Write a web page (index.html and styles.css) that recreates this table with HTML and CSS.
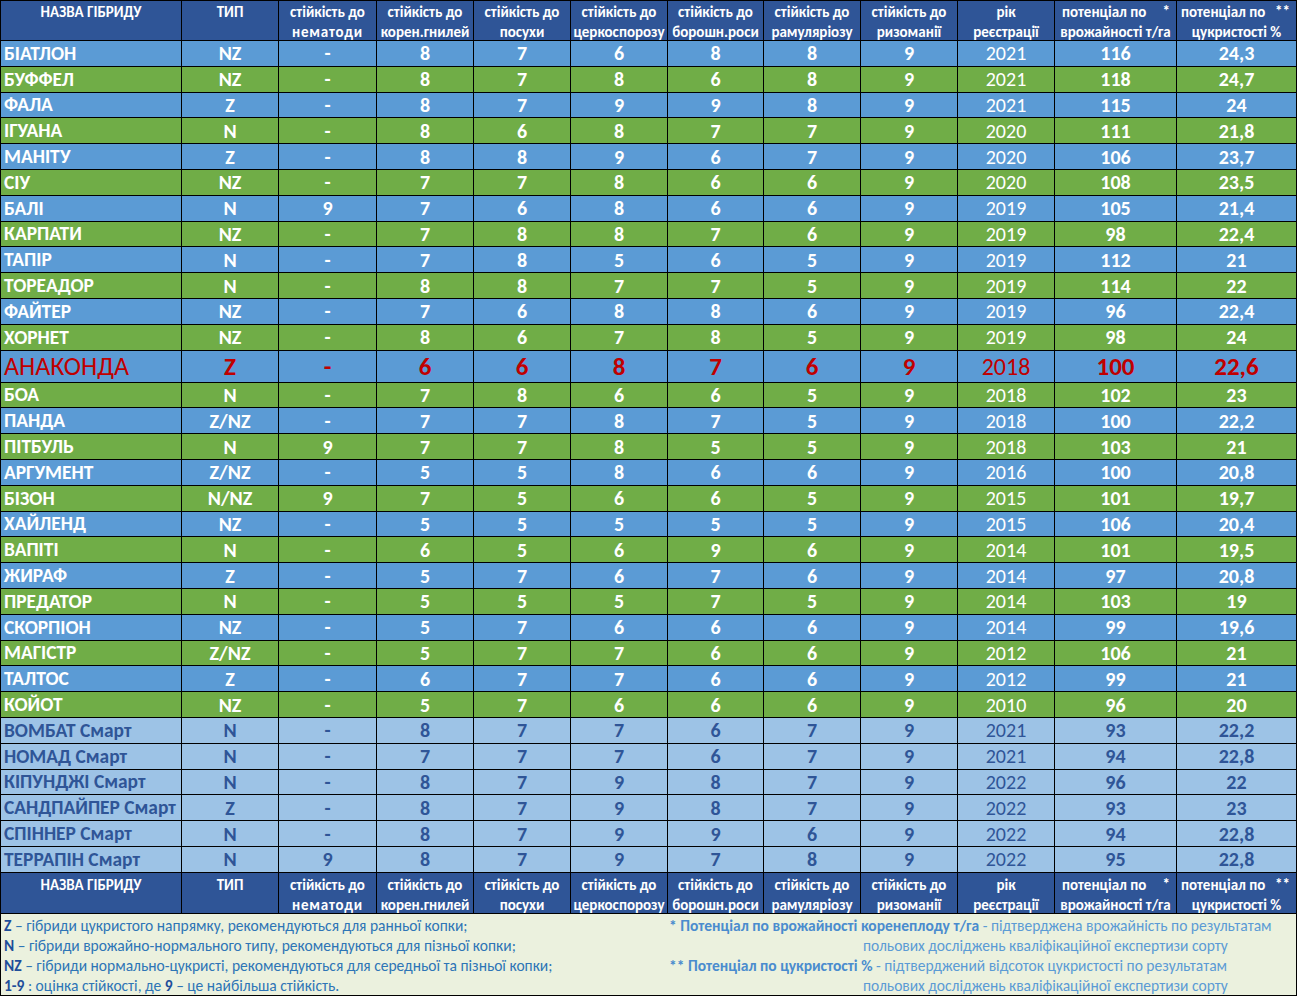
FILE: index.html
```html
<!DOCTYPE html>
<html lang="uk">
<head>
<meta charset="utf-8">
<title>Гібриди цукрових буряків</title>
<link rel="stylesheet" href="styles.css">
</head>
<body>
<div class="sheet">
  <div class="row head">
    <div class="c name"><span>НАЗВА ГІБРИДУ</span><span>&nbsp;</span></div>
    <div class="c"><span>ТИП</span><span>&nbsp;</span></div>
    <div class="c"><span>стійкість до</span><span class="sp">нематоди</span></div>
    <div class="c"><span>стійкість до</span><span>корен.гнилей</span></div>
    <div class="c"><span>стійкість до</span><span>посухи</span></div>
    <div class="c"><span>стійкість до</span><span>церкоспорозу</span></div>
    <div class="c"><span>стійкість до</span><span>борошн.роси</span></div>
    <div class="c"><span>стійкість до</span><span>рамуляріозу</span></div>
    <div class="c"><span>стійкість до</span><span>ризоманії</span></div>
    <div class="c"><span>рік</span><span>реєстрації</span></div>
    <div class="c"><span class="star s1">потенціал по <i>*</i></span><span>врожайності т/га</span></div>
    <div class="c"><span class="star s2">потенціал по <i>**</i></span><span>цукристості %</span></div>
  </div>

  <div class="row blue"><div class="c name">БІАТЛОН</div><div class="c">NZ</div><div class="c">-</div><div class="c">8</div><div class="c">7</div><div class="c">6</div><div class="c">8</div><div class="c">8</div><div class="c">9</div><div class="c yr">2021</div><div class="c">116</div><div class="c">24,3</div></div>
  <div class="row green"><div class="c name">БУФФЕЛ</div><div class="c">NZ</div><div class="c">-</div><div class="c">8</div><div class="c">7</div><div class="c">8</div><div class="c">6</div><div class="c">8</div><div class="c">9</div><div class="c yr">2021</div><div class="c">118</div><div class="c">24,7</div></div>
  <div class="row blue"><div class="c name">ФАЛА</div><div class="c">Z</div><div class="c">-</div><div class="c">8</div><div class="c">7</div><div class="c">9</div><div class="c">9</div><div class="c">8</div><div class="c">9</div><div class="c yr">2021</div><div class="c">115</div><div class="c">24</div></div>
  <div class="row green"><div class="c name">ІГУАНА</div><div class="c">N</div><div class="c">-</div><div class="c">8</div><div class="c">6</div><div class="c">8</div><div class="c">7</div><div class="c">7</div><div class="c">9</div><div class="c yr">2020</div><div class="c">111</div><div class="c">21,8</div></div>
  <div class="row blue"><div class="c name">МАНІТУ</div><div class="c">Z</div><div class="c">-</div><div class="c">8</div><div class="c">8</div><div class="c">9</div><div class="c">6</div><div class="c">7</div><div class="c">9</div><div class="c yr">2020</div><div class="c">106</div><div class="c">23,7</div></div>
  <div class="row green"><div class="c name">СІУ</div><div class="c">NZ</div><div class="c">-</div><div class="c">7</div><div class="c">7</div><div class="c">8</div><div class="c">6</div><div class="c">6</div><div class="c">9</div><div class="c yr">2020</div><div class="c">108</div><div class="c">23,5</div></div>
  <div class="row blue"><div class="c name">БАЛІ</div><div class="c">N</div><div class="c">9</div><div class="c">7</div><div class="c">6</div><div class="c">8</div><div class="c">6</div><div class="c">6</div><div class="c">9</div><div class="c yr">2019</div><div class="c">105</div><div class="c">21,4</div></div>
  <div class="row green"><div class="c name">КАРПАТИ</div><div class="c">NZ</div><div class="c">-</div><div class="c">7</div><div class="c">8</div><div class="c">8</div><div class="c">7</div><div class="c">6</div><div class="c">9</div><div class="c yr">2019</div><div class="c">98</div><div class="c">22,4</div></div>
  <div class="row blue"><div class="c name">ТАПІР</div><div class="c">N</div><div class="c">-</div><div class="c">7</div><div class="c">8</div><div class="c">5</div><div class="c">6</div><div class="c">5</div><div class="c">9</div><div class="c yr">2019</div><div class="c">112</div><div class="c">21</div></div>
  <div class="row green"><div class="c name">ТОРЕАДОР</div><div class="c">N</div><div class="c">-</div><div class="c">8</div><div class="c">8</div><div class="c">7</div><div class="c">7</div><div class="c">5</div><div class="c">9</div><div class="c yr">2019</div><div class="c">114</div><div class="c">22</div></div>
  <div class="row blue"><div class="c name">ФАЙТЕР</div><div class="c">NZ</div><div class="c">-</div><div class="c">7</div><div class="c">6</div><div class="c">8</div><div class="c">8</div><div class="c">6</div><div class="c">9</div><div class="c yr">2019</div><div class="c">96</div><div class="c">22,4</div></div>
  <div class="row green"><div class="c name">ХОРНЕТ</div><div class="c">NZ</div><div class="c">-</div><div class="c">8</div><div class="c">6</div><div class="c">7</div><div class="c">8</div><div class="c">5</div><div class="c">9</div><div class="c yr">2019</div><div class="c">98</div><div class="c">24</div></div>
  <div class="row blue big"><div class="c name">АНАКОНДА</div><div class="c">Z</div><div class="c">-</div><div class="c">6</div><div class="c">6</div><div class="c">8</div><div class="c">7</div><div class="c">6</div><div class="c">9</div><div class="c yr">2018</div><div class="c">100</div><div class="c">22,6</div></div>
  <div class="row green"><div class="c name">БОА</div><div class="c">N</div><div class="c">-</div><div class="c">7</div><div class="c">8</div><div class="c">6</div><div class="c">6</div><div class="c">5</div><div class="c">9</div><div class="c yr">2018</div><div class="c">102</div><div class="c">23</div></div>
  <div class="row blue"><div class="c name">ПАНДА</div><div class="c">Z/NZ</div><div class="c">-</div><div class="c">7</div><div class="c">7</div><div class="c">8</div><div class="c">7</div><div class="c">5</div><div class="c">9</div><div class="c yr">2018</div><div class="c">100</div><div class="c">22,2</div></div>
  <div class="row green"><div class="c name">ПІТБУЛЬ</div><div class="c">N</div><div class="c">9</div><div class="c">7</div><div class="c">7</div><div class="c">8</div><div class="c">5</div><div class="c">5</div><div class="c">9</div><div class="c yr">2018</div><div class="c">103</div><div class="c">21</div></div>
  <div class="row blue"><div class="c name">АРГУМЕНТ</div><div class="c">Z/NZ</div><div class="c">-</div><div class="c">5</div><div class="c">5</div><div class="c">8</div><div class="c">6</div><div class="c">6</div><div class="c">9</div><div class="c yr">2016</div><div class="c">100</div><div class="c">20,8</div></div>
  <div class="row green"><div class="c name">БІЗОН</div><div class="c">N/NZ</div><div class="c">9</div><div class="c">7</div><div class="c">5</div><div class="c">6</div><div class="c">6</div><div class="c">5</div><div class="c">9</div><div class="c yr">2015</div><div class="c">101</div><div class="c">19,7</div></div>
  <div class="row blue"><div class="c name">ХАЙЛЕНД</div><div class="c">NZ</div><div class="c">-</div><div class="c">5</div><div class="c">5</div><div class="c">5</div><div class="c">5</div><div class="c">5</div><div class="c">9</div><div class="c yr">2015</div><div class="c">106</div><div class="c">20,4</div></div>
  <div class="row green"><div class="c name">ВАПІТІ</div><div class="c">N</div><div class="c">-</div><div class="c">6</div><div class="c">5</div><div class="c">6</div><div class="c">9</div><div class="c">6</div><div class="c">9</div><div class="c yr">2014</div><div class="c">101</div><div class="c">19,5</div></div>
  <div class="row blue"><div class="c name">ЖИРАФ</div><div class="c">Z</div><div class="c">-</div><div class="c">5</div><div class="c">7</div><div class="c">6</div><div class="c">7</div><div class="c">6</div><div class="c">9</div><div class="c yr">2014</div><div class="c">97</div><div class="c">20,8</div></div>
  <div class="row green"><div class="c name">ПРЕДАТОР</div><div class="c">N</div><div class="c">-</div><div class="c">5</div><div class="c">5</div><div class="c">5</div><div class="c">7</div><div class="c">5</div><div class="c">9</div><div class="c yr">2014</div><div class="c">103</div><div class="c">19</div></div>
  <div class="row blue"><div class="c name">СКОРПІОН</div><div class="c">NZ</div><div class="c">-</div><div class="c">5</div><div class="c">7</div><div class="c">6</div><div class="c">6</div><div class="c">6</div><div class="c">9</div><div class="c yr">2014</div><div class="c">99</div><div class="c">19,6</div></div>
  <div class="row green"><div class="c name">МАГІСТР</div><div class="c">Z/NZ</div><div class="c">-</div><div class="c">5</div><div class="c">7</div><div class="c">7</div><div class="c">6</div><div class="c">6</div><div class="c">9</div><div class="c yr">2012</div><div class="c">106</div><div class="c">21</div></div>
  <div class="row blue"><div class="c name">ТАЛТОС</div><div class="c">Z</div><div class="c">-</div><div class="c">6</div><div class="c">7</div><div class="c">7</div><div class="c">6</div><div class="c">6</div><div class="c">9</div><div class="c yr">2012</div><div class="c">99</div><div class="c">21</div></div>
  <div class="row green"><div class="c name">КОЙОТ</div><div class="c">NZ</div><div class="c">-</div><div class="c">5</div><div class="c">7</div><div class="c">6</div><div class="c">6</div><div class="c">6</div><div class="c">9</div><div class="c yr">2010</div><div class="c">96</div><div class="c">20</div></div>
  <div class="row smart"><div class="c name">ВОМБАТ Смарт</div><div class="c">N</div><div class="c">-</div><div class="c">8</div><div class="c">7</div><div class="c">7</div><div class="c">6</div><div class="c">7</div><div class="c">9</div><div class="c yr">2021</div><div class="c">93</div><div class="c">22,2</div></div>
  <div class="row smart"><div class="c name">НОМАД Смарт</div><div class="c">N</div><div class="c">-</div><div class="c">7</div><div class="c">7</div><div class="c">7</div><div class="c">6</div><div class="c">7</div><div class="c">9</div><div class="c yr">2021</div><div class="c">94</div><div class="c">22,8</div></div>
  <div class="row smart"><div class="c name">КІПУНДЖІ Смарт</div><div class="c">N</div><div class="c">-</div><div class="c">8</div><div class="c">7</div><div class="c">9</div><div class="c">8</div><div class="c">7</div><div class="c">9</div><div class="c yr">2022</div><div class="c">96</div><div class="c">22</div></div>
  <div class="row smart"><div class="c name">САНДПАЙПЕР Смарт</div><div class="c">Z</div><div class="c">-</div><div class="c">8</div><div class="c">7</div><div class="c">9</div><div class="c">8</div><div class="c">7</div><div class="c">9</div><div class="c yr">2022</div><div class="c">93</div><div class="c">23</div></div>
  <div class="row smart"><div class="c name">СПІННЕР Смарт</div><div class="c">N</div><div class="c">-</div><div class="c">8</div><div class="c">7</div><div class="c">9</div><div class="c">9</div><div class="c">6</div><div class="c">9</div><div class="c yr">2022</div><div class="c">94</div><div class="c">22,8</div></div>
  <div class="row smart"><div class="c name">ТЕРРАПІН Смарт</div><div class="c">N</div><div class="c">9</div><div class="c">8</div><div class="c">7</div><div class="c">9</div><div class="c">7</div><div class="c">8</div><div class="c">9</div><div class="c yr">2022</div><div class="c">95</div><div class="c">22,8</div></div>

  <div class="row head foot">
    <div class="c name"><span>НАЗВА ГІБРИДУ</span><span>&nbsp;</span></div>
    <div class="c"><span>ТИП</span><span>&nbsp;</span></div>
    <div class="c"><span>стійкість до</span><span class="sp">нематоди</span></div>
    <div class="c"><span>стійкість до</span><span>корен.гнилей</span></div>
    <div class="c"><span>стійкість до</span><span>посухи</span></div>
    <div class="c"><span>стійкість до</span><span>церкоспорозу</span></div>
    <div class="c"><span>стійкість до</span><span>борошн.роси</span></div>
    <div class="c"><span>стійкість до</span><span>рамуляріозу</span></div>
    <div class="c"><span>стійкість до</span><span>ризоманії</span></div>
    <div class="c"><span>рік</span><span>реєстрації</span></div>
    <div class="c"><span class="star s1">потенціал по <i>*</i></span><span>врожайності т/га</span></div>
    <div class="c"><span class="star s2">потенціал по <i>**</i></span><span>цукристості %</span></div>
  </div>

  <div class="legend">
    <div class="legend-left">
      <p><b>Z</b> – гібриди цукристого напрямку, рекомендуються для ранньої копки;</p>
      <p><b>N</b> – гібриди врожайно-нормального типу, рекомендуються для пізньої копки;</p>
      <p><b>NZ</b> – гібриди нормально-цукристі, рекомендуються для середньої та пізньої копки;</p>
      <p><b>1-9</b> : оцінка стійкості, де <b>9</b> – це найбільша стійкість.</p>
    </div>
    <div class="legend-right">
      <p><b>* Потенціал по врожайності коренеплоду т/га</b> - підтверджена врожайність по результатам</p>
      <p class="cont">польових досліджень кваліфікаційної експертизи сорту</p>
      <p><b>** Потенціал по цукристості %</b> - підтверджений відсоток цукристості по результатам</p>
      <p class="cont">польових досліджень кваліфікаційної експертизи сорту</p>
    </div>
  </div>
</div>
</body>
</html>
```

FILE: styles.css
```css
html, body {
  margin: 0;
  padding: 0;
  background: #ffffff;
}

body {
  font-family: Carlito, Lato, "Open Sans", sans-serif;
}

.sheet {
  width: 1297px;
  box-sizing: border-box;
  display: grid;
  grid-template-columns: 180px 96px 97px 96px 96px 96px 95px 96px 96px 96px 121px 119px;
  grid-template-rows: 39px repeat(12, 24.8px) 31px repeat(19, 24.8px) 40px 81px;
  gap: 1px;
  padding: 1px;
  background: #000000;
}

.row {
  display: contents;
}

.c {
  display: flex;
  align-items: center;
  justify-content: center;
  font-weight: 700;
  font-size: 20px;
  color: #ffffff;
  white-space: nowrap;
  overflow: hidden;
}

.c.name {
  justify-content: flex-start;
  padding-left: 3px;
  font-size: 19.4px;
}

.c.yr {
  font-weight: 400;
}

.blue .c { background: #5b9bd5; }
.green .c { background: #70ad47; }
.smart .c { background: #9dc3e6; color: #2f5597; }

.big .c {
  color: #c00000;
  font-size: 25px;
}
.big .c.yr {
  font-size: 24px;
}
.big .c.name {
  font-weight: 400;
  font-size: 26px;
}

.head .c {
  background: #2f5597;
  flex-direction: column;
  justify-content: flex-start;
  align-items: center;
  font-size: 15px;
  line-height: 20px;
  padding-top: 1px;
  padding-left: 0;
}
.foot .c {
  padding-top: 2px;
}
.head .c span {
  display: block;
}
.head .sp {
  letter-spacing: 0.8px;
}
.head .star {
  width: 100%;
  box-sizing: border-box;
  text-align: left;
  position: relative;
}
.head .s1 {
  padding-left: 7px;
}
.head .s2 {
  padding-left: 4px;
}
.head .star i {
  font-style: normal;
  position: absolute;
  right: 6px;
  top: -1px;
}

.legend {
  grid-column: 1 / -1;
  background: #ebf1de;
  display: flex;
  padding-top: 2px;
  font-size: 15.5px;
  line-height: 20px;
}
.legend p {
  margin: 0;
  white-space: nowrap;
}
.legend-left {
  width: 665px;
  padding-left: 3px;
  color: #2e75b6;
}
.legend-left b {
  color: #1f4e9a;
}
.legend-right {
  color: #5b9bd5;
}
.legend-right b {
  color: #4a8cce;
}
.legend-right .cont {
  padding-left: 194px;
}
```
